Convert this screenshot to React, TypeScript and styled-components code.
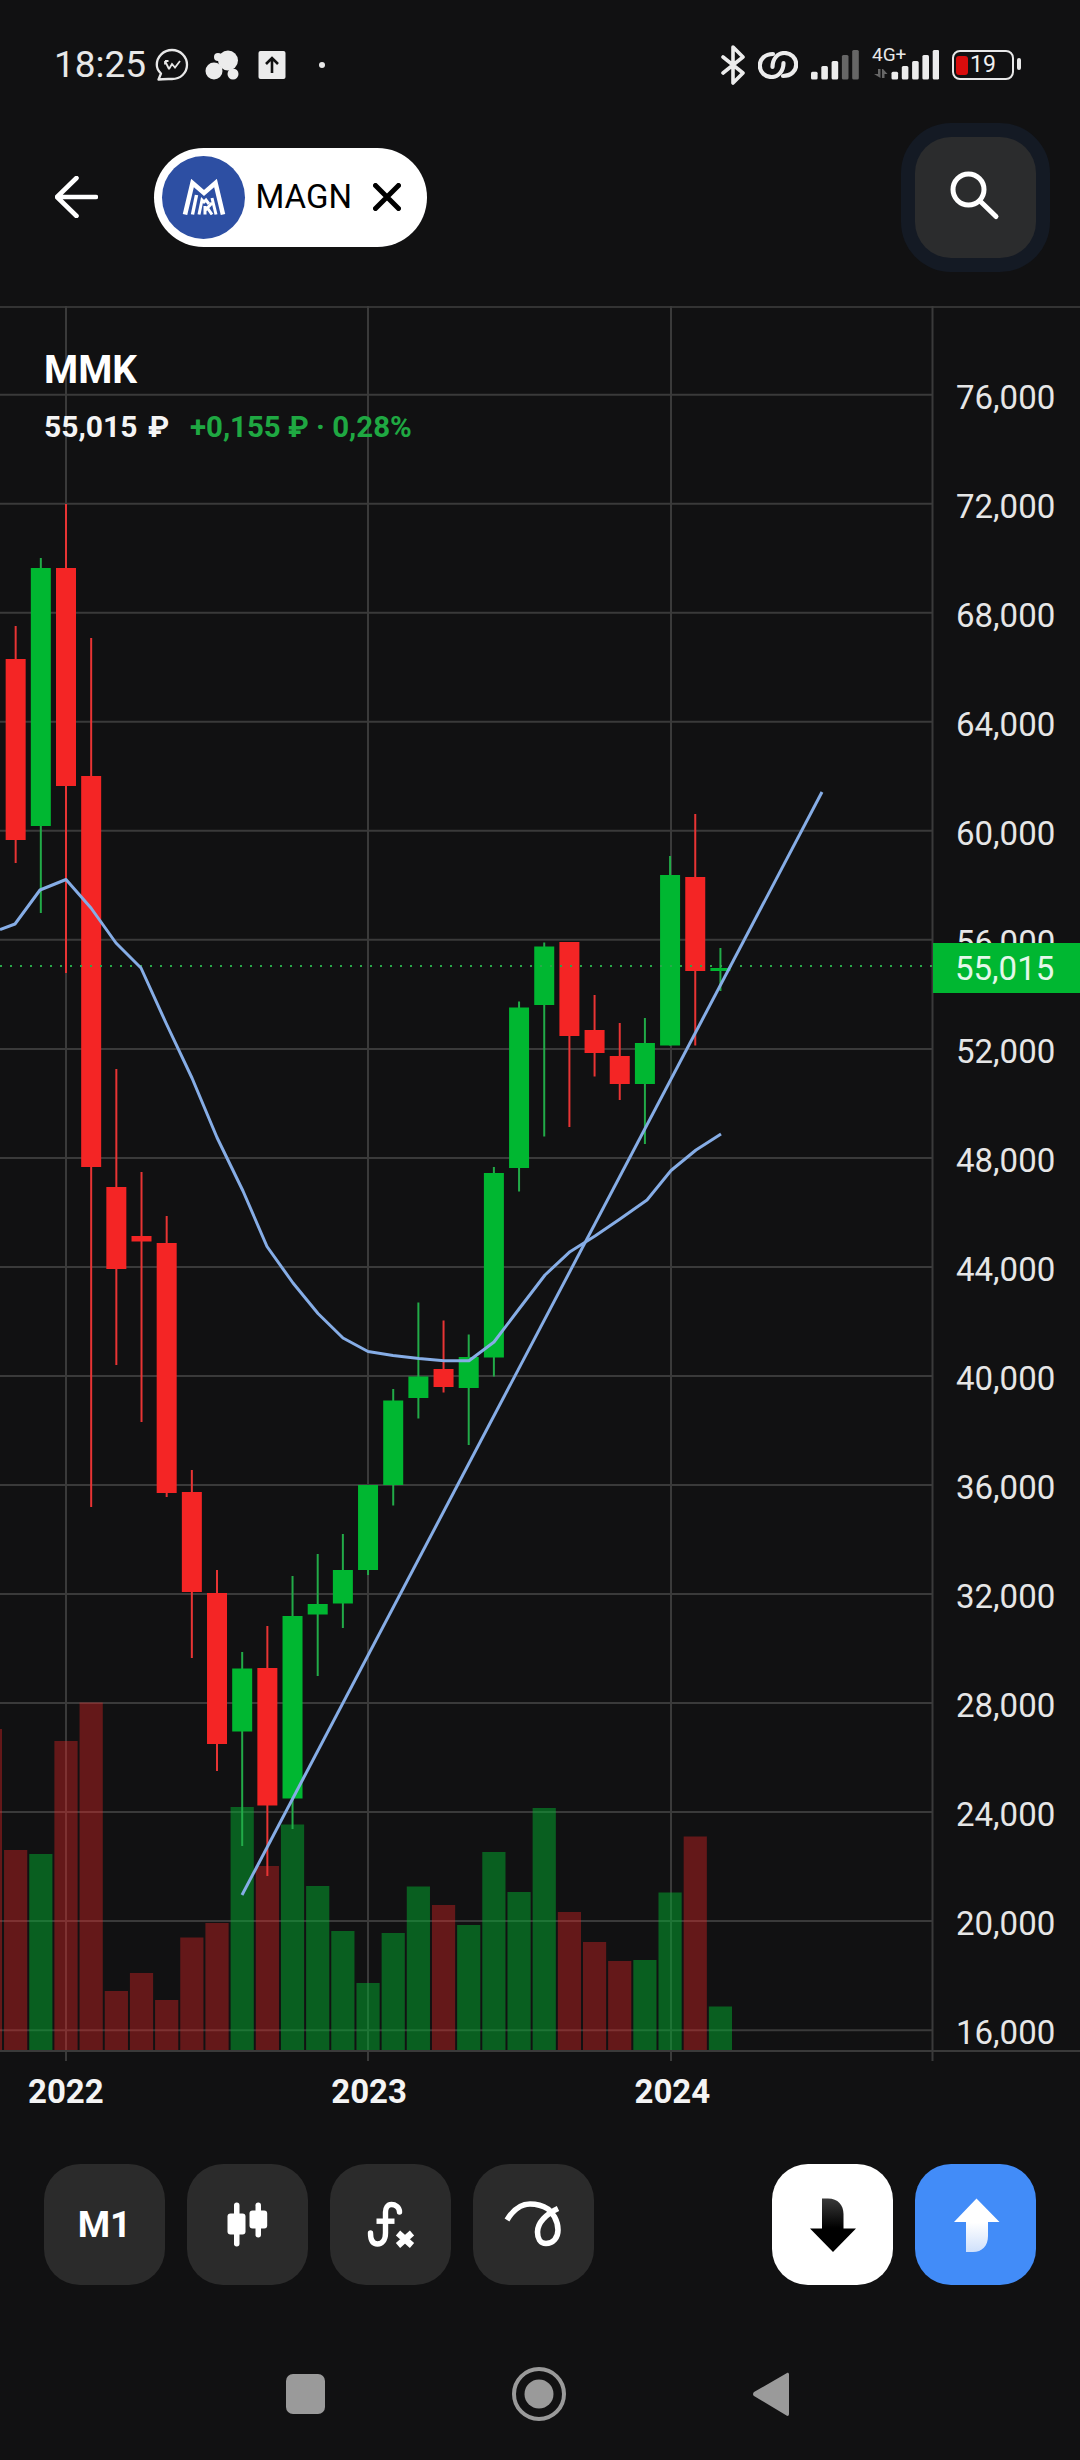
import React from 'react';
import styled, { createGlobalStyle } from 'styled-components';

const GlobalStyle = createGlobalStyle`
  html, body { margin: 0; padding: 0; background: #111112; }
  * { box-sizing: border-box; }
`;

const Screen = styled.div`
  width: 1080px;
  height: 2460px;
  background: #111112;
  font-family: Roboto, 'Liberation Sans', sans-serif;
  color: #fff;
  overflow: hidden;
  display: flex;
  flex-direction: column;
`;

/* ---------- status bar ---------- */
const StatusBar = styled.div`
  height: 130px;
  display: flex;
  align-items: center;
  justify-content: space-between;
  padding: 0 66px 0 54px;
`;
const StatusGroup = styled.div`
  display: flex;
  align-items: center;
  gap: ${(p: { $gap: number }) => p.$gap}px;
`;
const Clock = styled.span`
  font-size: 37px;
  line-height: 40px;
  color: #e8e8e8;
  margin-right: -7px;
`;
const UploadBadge = styled.svg`
  margin-left: 3px;
`;
const Dot = styled.span`
  width: 6px;
  height: 6px;
  border-radius: 50%;
  background: #e8e8e8;
  margin-left: 17px;
`;
const SignalCombo = styled.div`
  position: relative;
  width: 67px;
  height: 32px;
`;
const NetworkTag = styled.span`
  position: absolute;
  left: 0;
  top: -4px;
  font-size: 19px;
  line-height: 20px;
  color: #e8e8e8;
`;
const Battery = styled.div`
  position: relative;
  width: 62px;
  height: 30px;
  border: 2.5px solid #e8e8e8;
  border-radius: 8px;
  display: flex;
  align-items: center;
  padding-left: 2px;
  &::after {
    content: '';
    position: absolute;
    right: -9px;
    top: 6px;
    width: 4px;
    height: 12px;
    border-radius: 2px;
    background: #e8e8e8;
  }
`;
const BatteryFill = styled.div`
  width: 12px;
  height: 19px;
  border-radius: 3px;
  background: #d80c0c;
`;
const BatteryText = styled.span`
  font-size: 23px;
  line-height: 24px;
  margin-left: 2px;
  color: #f0f0f0;
`;

/* ---------- header ---------- */
const Header = styled.div`
  height: 176px;
  padding: 0 44px 42px 55px;
  display: flex;
  align-items: center;
`;
const BackButton = styled.div`
  width: 43px;
  height: 42px;
  margin-right: 56px;
  display: flex;
`;
const TickerChip = styled.div`
  width: 273px;
  height: 99px;
  border-radius: 50px;
  background: #fff;
  display: flex;
  align-items: center;
  padding-left: 8px;
`;
const LogoCircle = styled.div`
  width: 83px;
  height: 83px;
  border-radius: 50%;
  background: #2d4fa3;
  display: flex;
  align-items: center;
  justify-content: center;
`;
const ChipLabel = styled.span`
  margin-left: 10.5px;
  font-size: 33px;
  line-height: 36px;
  color: #000;
`;
const ChipClose = styled.div`
  margin-left: 21px;
  display: flex;
`;
const SearchButton = styled.div`
  margin-left: auto;
  width: 121px;
  height: 121px;
  border-radius: 36px;
  background: #2b2c2d;
  box-shadow: 0 0 0 14px #141a24;
  display: flex;
  align-items: center;
  justify-content: center;
`;

/* ---------- chart ---------- */
const ChartRow = styled.div`
  position: relative;
  height: 1746px;
  display: flex;
  border-top: 2px solid #333;
  border-bottom: 2px solid #3a3a3a;
`;
const ChartSvg = styled.svg`
  display: block;
  width: 934px;
  height: 1746px;
  margin-top: -2px;
  overflow: visible;
  flex: none;
`;
const PriceAxis = styled.div`
  flex: 1;
  display: flex;
  flex-direction: column;
  padding: 35px 0 0 22px;
`;
const PriceTick = styled.div`
  flex: none;
  height: 109.03px;
  display: flex;
  align-items: center;
  font-size: 33px;
  color: #e6e6e6;
`;
const PriceTag = styled.div`
  position: absolute;
  right: 0;
  top: 635px;
  width: 147px;
  height: 50px;
  background: #00b731;
  display: flex;
  align-items: center;
  padding-left: 22px;
  font-size: 33px;
  color: #e4f7e9;
`;
const Legend = styled.div`
  position: absolute;
  left: 44px;
  top: 40px;
`;
const LegendTitle = styled.div`
  font-size: 39px;
  line-height: 44px;
  font-weight: 700;
  color: #fff;
`;
const LegendRow = styled.div`
  display: flex;
  margin-top: 19px;
  font-size: 30px;
  line-height: 32px;
  font-weight: 700;
`;
const LegendPrice = styled.span`
  color: #f4f4f4;
  width: 146px;
  word-spacing: 3px;
`;
const LegendChange = styled.span`
  color: #1fa842;
  font-size: 29.4px;
`;

const TimeAxis = styled.div`
  height: 112px;
  padding: 20px 0 0 28px;
  display: flex;
  gap: 227.5px;
`;
const YearLabel = styled.span`
  font-size: 33px;
  line-height: 40px;
  font-weight: 700;
  color: #f4f4f4;
`;

/* ---------- toolbar ---------- */
const Toolbar = styled.div`
  height: 121px;
  padding: 0 44px;
  display: flex;
  justify-content: space-between;
`;
const ToolGroup = styled.div`
  display: flex;
  gap: 22px;
`;
const ToolButton = styled.div<{ $bg?: string }>`
  width: 121px;
  height: 121px;
  border-radius: 36px;
  background: ${(p) => p.$bg || '#2b2b2b'};
  display: flex;
  align-items: center;
  justify-content: center;
`;
const ToolLabel = styled.span`
  font-size: 37px;
  font-weight: 700;
  color: #fff;
`;

/* ---------- nav bar ---------- */
const NavBar = styled.div`
  height: 173px;
  padding: 44px 0 0 286px;
  display: flex;
  align-items: center;
  gap: 187px;
`;
const NavSquare = styled.div`
  width: 39px;
  height: 40px;
  border-radius: 7px;
  background: #9a9a9a;
`;

/* ---------- data ---------- */
type Candle = { up: boolean; h: number; o: number; c: number; l: number; v: number };

const candles: Candle[] = [
  { up: false, h: 626, o: 659, c: 840, l: 863, v: 1850 },
  { up: true, h: 558, o: 568, c: 826, l: 913, v: 1854 },
  { up: false, h: 504, o: 568, c: 786, l: 973, v: 1741 },
  { up: false, h: 638, o: 776, c: 1167, l: 1507, v: 1702.5 },
  { up: false, h: 1069, o: 1187, c: 1269, l: 1365, v: 1991 },
  { up: false, h: 1172, o: 1236, c: 1241.5, l: 1422, v: 1973 },
  { up: false, h: 1216, o: 1243, c: 1493, l: 1497, v: 2000 },
  { up: false, h: 1470, o: 1492, c: 1592, l: 1658, v: 1937.5 },
  { up: false, h: 1570, o: 1593, c: 1744, l: 1771, v: 1923 },
  { up: true, h: 1652, o: 1668.5, c: 1731.5, l: 1846, v: 1807 },
  { up: false, h: 1626, o: 1668, c: 1805.5, l: 1876, v: 1866 },
  { up: true, h: 1576, o: 1616, c: 1798.5, l: 1829, v: 1824.5 },
  { up: true, h: 1554, o: 1604, c: 1614.5, l: 1676, v: 1886 },
  { up: true, h: 1534, o: 1570, c: 1603.5, l: 1628, v: 1931 },
  { up: true, h: 1485, o: 1485, c: 1570, l: 1575, v: 1983 },
  { up: true, h: 1389, o: 1400.5, c: 1485, l: 1505.5, v: 1933 },
  { up: true, h: 1302.5, o: 1376.5, c: 1398, l: 1418.5, v: 1886.5 },
  { up: false, h: 1320.5, o: 1369, c: 1387, l: 1392.5, v: 1905 },
  { up: true, h: 1334.5, o: 1357, c: 1388, l: 1445, v: 1925 },
  { up: true, h: 1167, o: 1173, c: 1357.5, l: 1376.5, v: 1852 },
  { up: true, h: 1001.5, o: 1007.5, c: 1168, l: 1191.5, v: 1892 },
  { up: true, h: 942.5, o: 946.5, c: 1005, l: 1136.5, v: 1808 },
  { up: false, h: 942, o: 942, c: 1036, l: 1127, v: 1912 },
  { up: false, h: 995, o: 1030, c: 1053, l: 1076.5, v: 1942 },
  { up: false, h: 1023, o: 1056, c: 1084, l: 1100, v: 1961 },
  { up: true, h: 1018, o: 1043, c: 1084, l: 1144, v: 1960 },
  { up: true, h: 856, o: 875, c: 1045.5, l: 1045.5, v: 1892.5 },
  { up: false, h: 814, o: 877, c: 971, l: 1045.5, v: 1836.5 },
  { up: true, h: 948, o: 968, c: 971, l: 991, v: 2006.5 },
];

const cx = (i: number) => 66 + (i - 2) * 25.17;

const maLine =
  '0,929.5 15,924 40,890 66,879.5 91,908 116,943 141,968 166,1023 192,1078 217,1137.5 243,1191 267,1246.5 293,1283 318,1313.5 343,1338 368,1351.5 393,1355.5 419,1358.5 444,1360.7 469,1360.7 494,1342 519,1309 545,1275 570,1251.7 595,1236 620,1219 647,1200 671,1170.5 696,1150 721,1134';

const prices = [76, 72, 68, 64, 60, 56, 52, 48, 44, 40, 36, 32, 28, 24, 20, 16];
const gridY = (i: number) => 394.7 + i * 109.03;

const GREEN = '#00b731';
const RED = '#f42525';

const Chart = () => (
  <ChartSvg viewBox="0 306 934 1746">
    {prices.map((_, i) => (
      <line key={i} x1={0} x2={932} y1={gridY(i)} y2={gridY(i)} stroke="#3a3a3a" strokeWidth={2} />
    ))}
    {[66, 368, 671].map((x) => (
      <line key={x} x1={x} x2={x} y1={306} y2={2061} stroke="#3a3a3a" strokeWidth={2} />
    ))}
    <line x1={932.5} x2={932.5} y1={306} y2={2061} stroke="#3a3a3a" strokeWidth={2} />

    <rect x={-21} y={1729} width={23} height={321} fill="rgba(244,37,37,0.37)" />
    {candles.map((c, i) => (
      <rect
        key={i}
        x={cx(i) - 11.6}
        y={c.v}
        width={23.2}
        height={2050 - c.v}
        fill={c.up ? 'rgba(0,183,49,0.47)' : 'rgba(244,37,37,0.37)'}
      />
    ))}
    {candles.map((c, i) => (
      <g key={i}>
        <line
          x1={cx(i)}
          x2={cx(i)}
          y1={c.h}
          y2={c.l}
          stroke={c.up ? '#22ab48' : '#e83434'}
          strokeWidth={2}
        />
        <rect x={cx(i) - 10} y={c.o} width={20} height={c.c - c.o} fill={c.up ? GREEN : RED} />
      </g>
    ))}
    <line x1={0} x2={932} y1={966} y2={966} stroke="#2aa84a" strokeWidth={2} strokeDasharray="2 8" />
    <polyline points={maLine} fill="none" stroke="#86ade6" strokeWidth={3} strokeLinejoin="round" />
    <line x1={242} y1={1895} x2={822} y2={792} stroke="#86ade6" strokeWidth={3} />
  </ChartSvg>
);

const Signal = ({ dim }: { dim: number }) => {
  const tops = [21.7, 16, 11, 5, 0];
  return (
    <>
      {tops.map((t, i) => (
        <rect
          key={i}
          x={i * 10.3}
          y={t}
          width={6.6}
          height={29.5 - t}
          rx={1.5}
          fill={i >= 5 - dim ? '#666' : '#ececec'}
        />
      ))}
    </>
  );
};

export default function App() {
  return (
    <Screen>
      <GlobalStyle />
      <StatusBar>
        <StatusGroup $gap={16}>
          <Clock>18:25</Clock>
          <svg width="34" height="34" viewBox="0 0 34 34">
            <path
              d="M3.5 31.5 L6 25.5 C3 22.8 1.8 19.6 1.8 16.8 C1.8 8.6 8.6 2 17 2 C25.4 2 32 8.6 32 16.8 C32 25 25.4 31 17 31 C13 31 8 30.8 3.5 31.5 Z"
              fill="none"
              stroke="#e8e8e8"
              strokeWidth="2.3"
              strokeLinejoin="round"
            />
            <path d="M10 13 L14 21 M10 13 H13.5 M10 13 V16.5 M14 21 L17 16 L20 19.5 L25 13" fill="none" stroke="#e8e8e8" strokeWidth="1.8" />
          </svg>
          <svg width="34" height="30" viewBox="0 0 33 30">
            <circle cx="22.5" cy="10.5" r="10" fill="#ececec" />
            <circle cx="12.5" cy="7" r="4" fill="#ececec" />
            <circle cx="8.5" cy="21" r="8.5" fill="#ececec" />
            <circle cx="27.5" cy="24" r="5.5" fill="#ececec" />
          </svg>
          <UploadBadge width="28" height="28" viewBox="0 0 27 28">
            <rect width="27" height="28" rx="2" fill="#ececec" />
            <path d="M13.5 22 V7 M7.5 13 L13.5 7 L19.5 13" fill="none" stroke="#111" strokeWidth="2.6" />
          </UploadBadge>
          <Dot />
        </StatusGroup>
        <StatusGroup $gap={13}>
          <svg width="24" height="40" viewBox="0 0 24 40">
            <path
              d="M2 12 L22 28 L12 38 V2 L22 12 L2 28"
              fill="none"
              stroke="#ececec"
              strokeWidth="3.6"
              strokeLinecap="round"
              strokeLinejoin="round"
            />
          </svg>
          <svg width="40" height="28" viewBox="0 0 40 28">
            <path d="M15 3 C7 3 1.8 8 1.8 14.5 C1.8 21 7 26 13.5 26 C20.5 26 25.5 20 25.5 12" fill="none" stroke="#ececec" strokeWidth="4.2" strokeLinecap="round" />
            <path d="M25 25 C33 25 38.2 20 38.2 13.5 C38.2 7 33 2 26.5 2 C19.5 2 14.5 8 14.5 16" fill="none" stroke="#ececec" strokeWidth="4.2" strokeLinecap="round" />
          </svg>
          <svg width="48" height="30" viewBox="0 0 48 30">
            <Signal dim={2} />
          </svg>
          <SignalCombo>
            <svg width="67" height="32" viewBox="0 0 67 32">
              <path d="M2 25 H6 V20 H8.5 V29 Z M10 20 H11 L15.5 25 H12.5 V29 H10 Z" fill="#666" />
              <g transform="translate(19.5 1)">
                <Signal dim={0} />
              </g>
            </svg>
            <NetworkTag>4G+</NetworkTag>
          </SignalCombo>
          <Battery>
            <BatteryFill />
            <BatteryText>19</BatteryText>
          </Battery>
        </StatusGroup>
      </StatusBar>

      <Header>
        <BackButton>
          <svg width="43" height="42" viewBox="0 0 43 42">
            <path
              d="M41 21 H2 M21.5 2 L2 21 L21.5 40"
              fill="none"
              stroke="#fff"
              strokeWidth="4.6"
              strokeLinecap="round"
              strokeLinejoin="round"
            />
          </svg>
        </BackButton>
        <TickerChip>
          <LogoCircle>
            <svg width="44" height="36" viewBox="0 0 42 36">
              <g fill="none" stroke="#fff">
                <path d="M2 35.5 L9.5 4 L21 14 L32.5 4 L40 35.5" strokeWidth="4.6" />
                <path d="M9.5 35.5 L13.5 16" strokeWidth="3.4" />
                <path d="M16 35.5 L19 21 L21 23 L23 21 L26 25" strokeWidth="3" />
                <path d="M29 19 L33 35.5 M22 35.5 V27 M22.5 31 L29 24 M24.5 29 L29 35.5" strokeWidth="3" />
              </g>
            </svg>
          </LogoCircle>
          <ChipLabel>MAGN</ChipLabel>
          <ChipClose>
            <svg width="28" height="28" viewBox="0 0 28 28">
              <path d="M2.5 2.5 L25.5 25.5 M25.5 2.5 L2.5 25.5" stroke="#000" strokeWidth="5" strokeLinecap="round" />
            </svg>
          </ChipClose>
        </TickerChip>
        <SearchButton>
          <svg width="60" height="60" viewBox="0 0 60 60">
            <circle cx="22.5" cy="22.5" r="15.5" fill="none" stroke="#fff" strokeWidth="5" />
            <path d="M34 34 L50 49.5" stroke="#fff" strokeWidth="5" strokeLinecap="round" />
          </svg>
        </SearchButton>
      </Header>

      <ChartRow>
        <Chart />
        <PriceAxis>
          {prices.map((p) => (
            <PriceTick key={p}>{p},000</PriceTick>
          ))}
        </PriceAxis>
        <PriceTag>55,015</PriceTag>
        <Legend>
          <LegendTitle>MMK</LegendTitle>
          <LegendRow>
            <LegendPrice>55,015 ₽</LegendPrice>
            <LegendChange>+0,155 ₽ · 0,28%</LegendChange>
          </LegendRow>
        </Legend>
      </ChartRow>

      <TimeAxis>
        <YearLabel>2022</YearLabel>
        <YearLabel>2023</YearLabel>
        <YearLabel>2024</YearLabel>
      </TimeAxis>

      <Toolbar>
        <ToolGroup>
          <ToolButton>
            <ToolLabel>M1</ToolLabel>
          </ToolButton>
          <ToolButton>
            <svg width="70" height="70" viewBox="0 0 70 70">
              <g fill="#fff">
                <rect x="21" y="12.5" width="5.5" height="44" rx="2.7" />
                <rect x="14.5" y="23.5" width="18" height="21" rx="3" />
                <rect x="42.5" y="12.5" width="5.5" height="35" rx="2.7" />
                <rect x="36.5" y="20.5" width="17.7" height="18" rx="3" />
              </g>
            </svg>
          </ToolButton>
          <ToolButton>
            <svg width="70" height="70" viewBox="0 0 70 70">
              <path
                d="M43.5 22 C43.5 17 39 14.5 35.5 14.5 C31.5 14.5 29.5 18 29.5 22 V43 C29.5 50 26 54 21.5 54 C17 54 14.5 50 14.5 43"
                fill="none"
                stroke="#fff"
                strokeWidth="5.4"
                strokeLinecap="round"
              />
              <path d="M20.5 31.2 H38.5" stroke="#fff" strokeWidth="5.4" />
              <path d="M42 43 L56 55.5 M56 43 L42 55.5" stroke="#fff" strokeWidth="6.4" />
            </svg>
          </ToolButton>
          <ToolButton>
            <svg width="70" height="70" viewBox="1 0 70 70">
              <path
                d="M9 30 C15 20 23 14 32 14 C40 14 46 16.5 50 19 C54 22 60 30 60 40 C60 48 55 53.5 48 53.5 C42 53.5 39.5 48 39.5 42 C39.5 33 48 24 60 18.5"
                fill="none"
                stroke="#fff"
                strokeWidth="5.6"
              />
            </svg>
          </ToolButton>
        </ToolGroup>
        <ToolGroup>
          <ToolButton $bg="#ffffff">
            <svg width="70" height="70" viewBox="0 0 70 70">
              <defs>
                <linearGradient id="downGrad" x1="0" y1="0" x2="0" y2="1">
                  <stop offset="0" stopColor="#3a3a3a" />
                  <stop offset="0.55" stopColor="#000" />
                </linearGradient>
              </defs>
              <path d="M24 8.5 H30 C40 8.5 45.5 15 45.5 24 V38.5 H58 L35 62 L12 38.5 H24 Z" fill="url(#downGrad)" />
            </svg>
          </ToolButton>
          <ToolButton $bg="#428cf8">
            <svg width="70" height="70" viewBox="0 0 70 70">
              <defs>
                <linearGradient id="upGrad" x1="0" y1="0" x2="0" y2="1">
                  <stop offset="0.45" stopColor="#fff" />
                  <stop offset="1" stopColor="#cfe0fb" />
                </linearGradient>
              </defs>
              <path d="M35.5 8.5 L58.5 32 H47 V46 C47 56 41 62 32 62 H25 V32 H13 Z" fill="url(#upGrad)" />
            </svg>
          </ToolButton>
        </ToolGroup>
      </Toolbar>

      <NavBar>
        <NavSquare />
        <svg width="54" height="54" viewBox="0 0 54 54">
          <circle cx="27" cy="27" r="25" fill="none" stroke="#9a9a9a" strokeWidth="4" />
          <circle cx="27" cy="27" r="14.5" fill="#9a9a9a" />
        </svg>
        <svg width="36" height="46" viewBox="0 0 36 46">
          <path d="M34 2 C35 1.5 36 2 36 3.5 V43 C36 45 34.5 45.5 33.5 44.5 L1 25 C-0.3 24 -0.3 22.5 1 21 Z" fill="#9a9a9a" />
        </svg>
      </NavBar>
    </Screen>
  );
}
